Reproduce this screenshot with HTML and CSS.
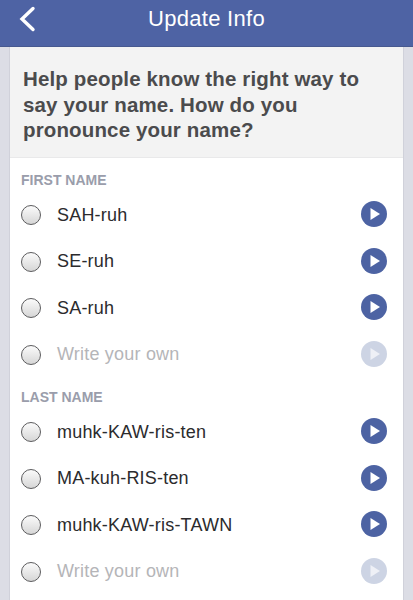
FILE: index.html
```html
<!DOCTYPE html>
<html lang="en">
<head>
<meta charset="utf-8">
<title>Update Info</title>
<link rel="stylesheet" href="styles.css">
</head>
<body>
<header class="topbar">
  <svg class="back" width="18" height="26" viewBox="0 0 18 26" aria-hidden="true"><path d="M15 2.500 4 13l11 10.500" fill="none" stroke="#fff" stroke-width="3.400" stroke-linecap="round" stroke-linejoin="miter"/></svg>
  <h1 class="title">Update Info</h1>
</header>
<main class="card">
  <section class="intro">Help people know the right way to say your name. How do you pronounce your name?</section>
  <section class="group first">
    <h2 class="label">FIRST NAME</h2>
    <div class="row"><span class="radio"></span><span class="name">SAH-ruh</span><svg class="play" viewBox="0 0 26 26"><circle cx="13" cy="13" r="13" fill="#4d63a3"/><path d="M9.500 7 19 13l-9.500 6z" fill="#fff"/></svg></div>
    <div class="row"><span class="radio"></span><span class="name">SE-ruh</span><svg class="play" viewBox="0 0 26 26"><circle cx="13" cy="13" r="13" fill="#4d63a3"/><path d="M9.500 7 19 13l-9.500 6z" fill="#fff"/></svg></div>
    <div class="row"><span class="radio"></span><span class="name">SA-ruh</span><svg class="play" viewBox="0 0 26 26"><circle cx="13" cy="13" r="13" fill="#4d63a3"/><path d="M9.500 7 19 13l-9.500 6z" fill="#fff"/></svg></div>
    <div class="row"><span class="radio"></span><span class="name own">Write your own</span><svg class="play" viewBox="0 0 26 26"><circle cx="13" cy="13" r="13" fill="#cdd4e4"/><path d="M9.500 7 19 13l-9.500 6z" fill="#eef0f6"/></svg></div>
  </section>
  <section class="group last">
    <h2 class="label">LAST NAME</h2>
    <div class="row"><span class="radio"></span><span class="name">muhk-KAW-ris-ten</span><svg class="play" viewBox="0 0 26 26"><circle cx="13" cy="13" r="13" fill="#4d63a3"/><path d="M9.500 7 19 13l-9.500 6z" fill="#fff"/></svg></div>
    <div class="row"><span class="radio"></span><span class="name">MA-kuh-RIS-ten</span><svg class="play" viewBox="0 0 26 26"><circle cx="13" cy="13" r="13" fill="#4d63a3"/><path d="M9.500 7 19 13l-9.500 6z" fill="#fff"/></svg></div>
    <div class="row"><span class="radio"></span><span class="name">muhk-KAW-ris-TAWN</span><svg class="play" viewBox="0 0 26 26"><circle cx="13" cy="13" r="13" fill="#4d63a3"/><path d="M9.500 7 19 13l-9.500 6z" fill="#fff"/></svg></div>
    <div class="row"><span class="radio"></span><span class="name own">Write your own</span><svg class="play" viewBox="0 0 26 26"><circle cx="13" cy="13" r="13" fill="#cdd4e4"/><path d="M9.500 7 19 13l-9.500 6z" fill="#eef0f6"/></svg></div>
  </section>
</main>
</body>
</html>
```
FILE: styles.css
```css
html, body {
  margin: 0;
  padding: 0;
  height: 600px;
  overflow: hidden;
  background: #dcdde5;
  font-family: "Liberation Sans", Arial, sans-serif;
}
.topbar {
  height: 47px;
  box-sizing: border-box;
  background: #4e63a4;
  border-bottom: 1px solid #47598f;
  display: flex;
  align-items: center;
  justify-content: center;
  position: relative;
  padding-bottom: 8px;
}
.back {
  position: absolute;
  left: 18px;
  top: 6px;
}
.title {
  margin: 0;
  font-size: 22px;
  letter-spacing: 0.300px;
  font-weight: 400;
  color: #fff;
}
.card {
  width: 393px;
  margin-left: 10px;
  height: 553px;
  background: #fff;
  box-shadow: 0 0 0 1px #d0d1da;
}
.intro {
  height: 111px;
  box-sizing: border-box;
  background: #f3f3f3;
  border-bottom: 1px solid #e9e9ea;
  padding: 19px 30px 0 13px;
  font-size: 20.500px;
  letter-spacing: 0.140px;
  line-height: 25.500px;
  font-weight: 700;
  color: #4b4b4d;
}
.group {
  display: flex;
  flex-direction: column;
}
.group.first {
  padding-top: 14px;
}
.group.last {
  padding-top: 11px;
}
.label {
  margin: 0 0 4px;
  padding-left: 11px;
  font-size: 14px;
  line-height: 16px;
  font-weight: 700;
  color: #9a9dab;
}
.row {
  height: 46.500px;
  display: flex;
  align-items: center;
  padding: 0 16px 0 11px;
}
.radio {
  width: 18px;
  height: 18px;
  border: 1.500px solid #5c5c5e;
  border-radius: 50%;
  background: linear-gradient(#fbfbfb, #d6d6d6);
  flex: none;
}
.name {
  margin-left: 16px;
  flex: 1;
  font-size: 18px;
  letter-spacing: 0.200px;
  color: #2b2b2d;
}
.own {
  color: #b5b5b8;
}
.play {
  width: 26px;
  height: 26px;
  flex: none;
  position: relative;
  top: -1px;
}
```
